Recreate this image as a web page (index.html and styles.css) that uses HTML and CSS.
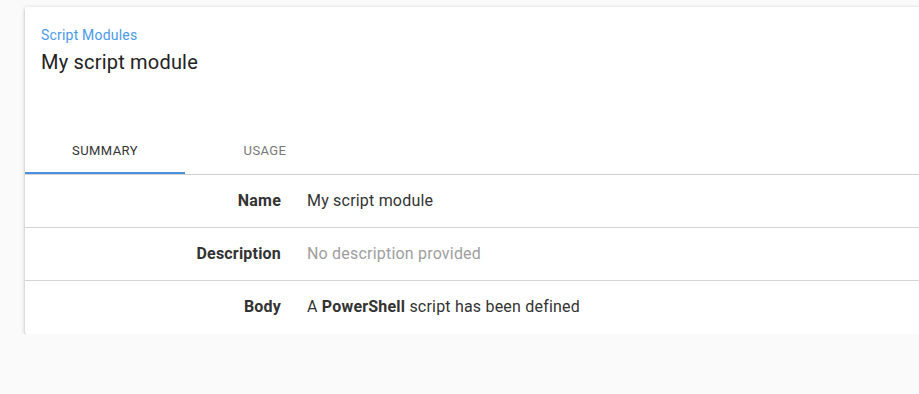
FILE: index.html
```html
<!DOCTYPE html>
<html lang="en">
<head>
    <meta charset="utf-8">
    <title>Script Modules - My script module</title>
    <link rel="stylesheet" href="styles.css">
</head>
<body>
    <div class="page">
        <div class="card">
            <div class="card-header">
                <a class="breadcrumb" href="#">Script Modules</a>
                <h1 class="card-title">My script module</h1>
            </div>

            <div class="tabs">
                <div class="tab tab-active">Summary</div>
                <div class="tab">Usage</div>
            </div>

            <div class="summary">
                <div class="summary-row">
                    <div class="summary-label">Name</div>
                    <div class="summary-value">My script module</div>
                </div>
                <div class="summary-row">
                    <div class="summary-label">Description</div>
                    <div class="summary-value summary-empty">No description provided</div>
                </div>
                <div class="summary-row">
                    <div class="summary-label">Body</div>
                    <div class="summary-value">A <strong>PowerShell</strong> script has been defined</div>
                </div>
            </div>
        </div>
    </div>
</body>
</html>
```

FILE: styles.css
```css
html, body {
    margin: 0;
    padding: 0;
    background-color: #fafafa;
    overflow: hidden;
}

body {
    font-family: Roboto, "Noto Sans", sans-serif;
    color: #333;
}

.page {
    padding: 7px 0 0 25px;
}

.card {
    margin-right: -20px;
    background-color: #fff;
    border-radius: 2px;
    box-shadow: 0 1px 4px rgba(0, 0, 0, 0.22), 0 2px 2px rgba(0, 0, 0, 0.12);
}

.card-header {
    padding: 18px 16px 0;
    height: 103px;
    box-sizing: border-box;
}

.breadcrumb {
    display: block;
    color: #4a9be8;
    font-size: 14px;
    letter-spacing: 0.2px;
    line-height: 20px;
    text-decoration: none;
}

.card-title {
    margin: 5px 0 0;
    font-size: 20px;
    font-weight: 400;
    letter-spacing: 0.2px;
    line-height: 24px;
    color: #222;
}

/* Pestañas */
.tabs {
    display: flex;
    height: 48px;
    margin-top: 16px;
    border-bottom: 1px solid #d0d0d0;
}

.tab {
    width: 160px;
    display: flex;
    align-items: center;
    justify-content: center;
    font-size: 13px;
    font-weight: 400;
    letter-spacing: 0.4px;
    text-transform: uppercase;
    color: #777;
    border-bottom: 2px solid transparent;
    box-sizing: border-box;
    padding-top: 2px;
}

.tab-active {
    color: #333;
    border-bottom-color: #4a90e2;
}

/* Filas del resumen */
.summary-row {
    display: grid;
    grid-template-columns: 256px 1fr;
    column-gap: 26px;
    align-items: center;
    height: 53px;
    border-bottom: 1px solid #d4d4d4;
    font-size: 16px;
    letter-spacing: 0.2px;
    box-sizing: border-box;
    padding-bottom: 2px;
}

.summary-row:last-child {
    border-bottom: none;
    height: 53px;
}

.summary-label {
    text-align: right;
    font-weight: 700;
    color: #333;
}

.summary-value {
    color: #333;
}

.summary-value strong {
    font-weight: 700;
}

.summary-empty {
    color: #9e9e9e;
}
```
